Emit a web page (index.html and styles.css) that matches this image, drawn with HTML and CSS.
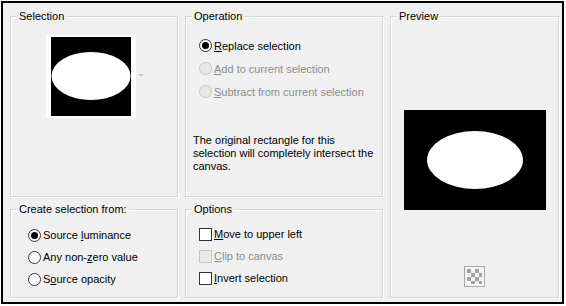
FILE: index.html
```html
<!DOCTYPE html>
<html>
<head>
<meta charset="utf-8">
<link rel="stylesheet" href="styles.css">
</head>
<body>
<div class="dialog">
  <fieldset class="group sel">
    <legend>Selection</legend>
    <div class="thumbrow">
      <div class="thumb">
        <svg width="80" height="79" viewBox="0 0 80 79">
          <rect width="80" height="79" fill="#000"/>
          <ellipse cx="40" cy="39" rx="39.5" ry="24" fill="#fff"/>
        </svg>
      </div>
      <span class="drop"></span>
    </div>
  </fieldset>

  <fieldset class="group op">
    <legend>Operation</legend>
    <div class="rows r23">
      <div class="choice"><span class="radio checked"></span><span class="lbl"><u>R</u>eplace selection</span></div>
      <div class="choice off"><span class="radio"></span><span class="lbl"><u>A</u>dd to current selection</span></div>
      <div class="choice off"><span class="radio"></span><span class="lbl"><u>S</u>ubtract from current selection</span></div>
    </div>
    <p class="note">The original rectangle for this<br>selection will completely intersect the<br>canvas.</p>
  </fieldset>

  <fieldset class="group preview">
    <legend>Preview</legend>
    <div class="pv">
      <svg width="142" height="100" viewBox="0 0 142 100">
        <rect width="142" height="100" fill="#000"/>
        <ellipse cx="71" cy="50" rx="48" ry="29" fill="#fff"/>
      </svg>
    </div>
    <div class="checker">
      <svg width="21" height="21" viewBox="0 0 21 21">
        <rect x="0.5" y="0.5" width="20" height="20" fill="#f4f4f4" stroke="#a8a8a8"/>
        <g fill="#a3a3a3">
          <rect x="3" y="3" width="4" height="4"/>
          <rect x="11" y="3" width="4" height="4"/>
          <rect x="7" y="7" width="4" height="4"/>
          <rect x="15" y="7" width="3" height="4"/>
          <rect x="3" y="11" width="4" height="4"/>
          <rect x="11" y="11" width="4" height="4"/>
          <rect x="7" y="15" width="4" height="3"/>
          <rect x="15" y="15" width="3" height="3"/>
        </g>
      </svg>
    </div>
  </fieldset>

  <fieldset class="group from">
    <legend>Create selection from:</legend>
    <div class="rows r22">
      <div class="choice"><span class="radio checked"></span><span class="lbl">Source <u>l</u>uminance</span></div>
      <div class="choice"><span class="radio"></span><span class="lbl">Any non-<u>z</u>ero value</span></div>
      <div class="choice"><span class="radio"></span><span class="lbl">S<u>o</u>urce opacity</span></div>
    </div>
  </fieldset>

  <fieldset class="group options">
    <legend>Options</legend>
    <div class="rows r22">
      <div class="choice"><span class="check"></span><span class="lbl"><u>M</u>ove to upper left</span></div>
      <div class="choice off"><span class="check"></span><span class="lbl"><u>C</u>lip to canvas</span></div>
      <div class="choice"><span class="check"></span><span class="lbl"><u>I</u>nvert selection</span></div>
    </div>
  </fieldset>
</div>
</body>
</html>
```

FILE: styles.css
```css
html, body {
  margin: 0;
  padding: 0;
  background: #fff;
}

body {
  font-family: "Liberation Sans", Arial, sans-serif;
  font-size: 11px;
  color: #000;
}

.dialog {
  margin: 1px;
  width: 563px;
  height: 303px;
  box-sizing: border-box;
  border: 2px solid #000;
  background: #f0f0f0;
  padding: 6px 3px 4px 7px;
  display: grid;
  grid-template-columns: 168px 198px 169px;
  grid-template-rows: 188px 96px;
  column-gap: 7px;
  row-gap: 5px;
}

.group {
  margin: 0;
  min-width: 0;
  border: 1px solid #d8d8d8;
  box-shadow: 1px 1px 0 #fff, inset 1px 1px 0 #fff;
  padding: 0;
  box-sizing: border-box;
}

.group legend {
  margin-left: 6px;
  padding: 0 2px;
  line-height: 14px;
  height: 14px;
  background: #f0f0f0;
}

.sel { grid-column: 1; grid-row: 1; }
.op { grid-column: 2; grid-row: 1; }
.preview { grid-column: 3; grid-row: 1 / span 2; }
.from { grid-column: 1; grid-row: 2; }
.options { grid-column: 2; grid-row: 2; }

.thumbrow {
  display: flex;
  justify-content: center;
  align-items: center;
  gap: 2px;
  padding: 12px 0 0 2px;
}

.thumb {
  background: #fff;
  padding: 2px 5px 2px 5px;
  display: flex;
}

.thumb svg, .pv svg, .checker svg { display: block; }

.drop {
  width: 0;
  height: 0;
  border-left: 3px solid transparent;
  border-right: 3px solid transparent;
  border-top: 3px solid #c4c4c4;
  margin-top: -2px;
}

.rows { display: flex; flex-direction: column; }
.op .rows { padding: 11px 0 0 13px; }
.from .rows { padding: 8px 0 0 17px; }
.options .rows { padding: 7px 0 0 13px; }
.r23 .choice { height: 23px; }
.r22 .choice { height: 22px; }

.choice {
  display: flex;
  align-items: center;
  gap: 2px;
  line-height: 14px;
  white-space: nowrap;
}

.choice.off .lbl { color: #8d8d8d; }

.radio {
  width: 13px;
  height: 13px;
  box-sizing: border-box;
  border: 1px solid #333;
  border-radius: 50%;
  background: #fff;
  display: flex;
  align-items: center;
  justify-content: center;
  flex: none;
}

.radio.checked::after {
  content: "";
  width: 7px;
  height: 7px;
  border-radius: 50%;
  background: #000;
}

.choice.off .radio {
  border-color: #c6c6c6;
  background: #e8e8e8;
}

.check {
  width: 13px;
  height: 13px;
  box-sizing: border-box;
  border: 1px solid #333;
  background: #fff;
  flex: none;
}

.choice.off .check {
  border-color: #c6c6c6;
  background: #e8e8e8;
}

.note {
  margin: 31px 0 0 7px;
  line-height: 13px;
}

.preview {
  display: flex;
  flex-direction: column;
  align-items: center;
}

.pv { margin-top: 87px; }
.checker { margin-top: 56px; }
```
